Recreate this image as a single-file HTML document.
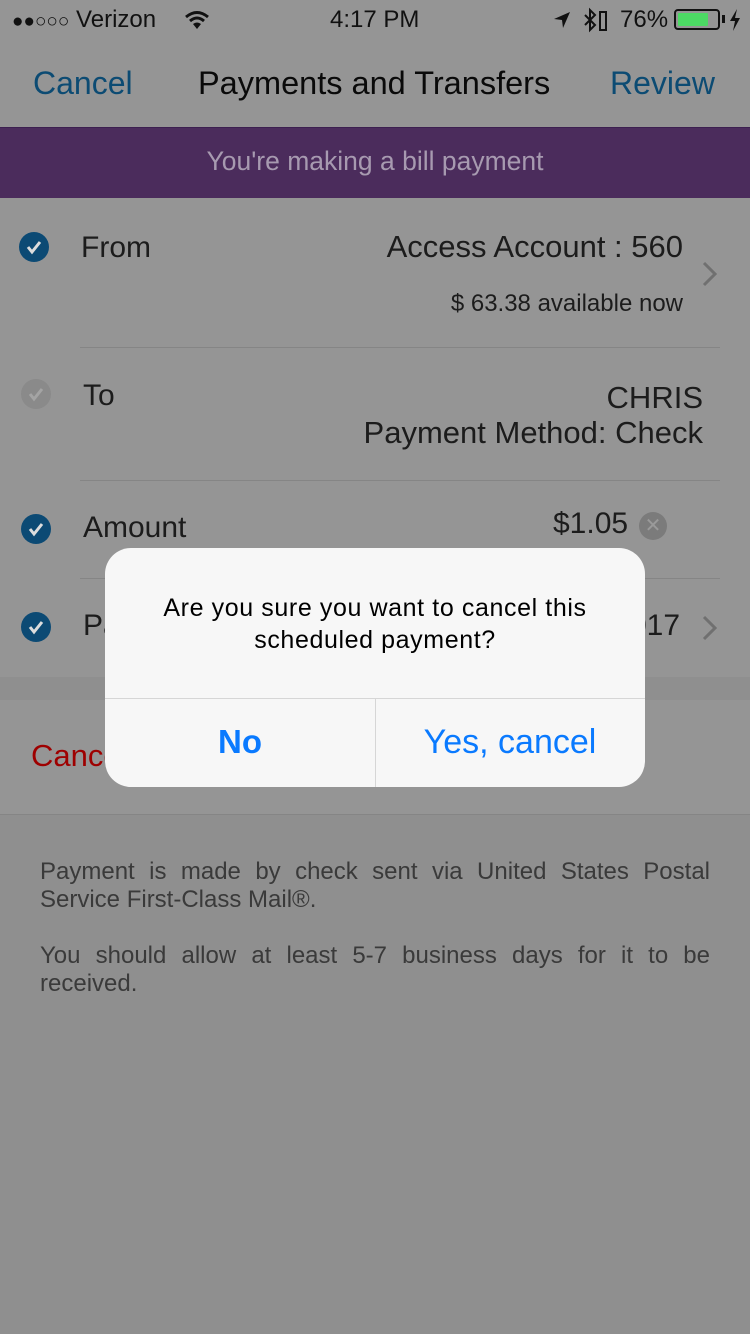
<!DOCTYPE html>
<html><head><meta charset="utf-8"><style>
*{margin:0;padding:0;box-sizing:border-box}
body{width:750px;height:1334px;position:relative;overflow:hidden;background:#8f8f8f;font-family:"Liberation Sans",sans-serif;color:#1c1c1c}
.a{position:absolute;white-space:nowrap}
.row{position:absolute;left:0;width:750px;background:#959595}
.line{position:absolute;left:80px;right:30px;height:1px;background:#858585}
.chk{position:absolute;width:30px;height:30px;border-radius:50%;background:#0c4a74}
.chk svg{position:absolute;left:0;top:0}
.lbl{font-size:30px;color:#1c1c1c}
.chev{position:absolute}
</style></head><body>
<div class="row" style="top:0;height:128px;background:#959595"></div>
<div class="a" style="left:12px;top:6px;font-size:24px;color:#111"><span style="font-size:19px">●●○○○</span> Verizon</div>
<svg class="a" style="left:184px;top:10px" width="26" height="20" viewBox="0 0 26 20"><path d="M2 7 Q13 -2 24 7" stroke="#111" stroke-width="3" fill="none"/><path d="M6 11 Q13 5 20 11" stroke="#111" stroke-width="3" fill="none"/><path d="M13 19 L9 14 Q13 11 17 14 Z" fill="#111"/></svg>
<div class="a" style="left:330px;top:6px;font-size:24px;color:#111">4:17 PM</div>
<svg class="a" style="left:552px;top:10px" width="20" height="20"><path d="M18 2 L2 9 L10 10 L11 18 Z" fill="#111"/></svg>
<svg class="a" style="left:582px;top:6px" width="28" height="28"><path d="M3 9 L13 19 L8 24 L8 4 L13 9 L3 19" stroke="#111" stroke-width="2" fill="none"/><rect x="18" y="6" width="6" height="18" stroke="#111" stroke-width="2" fill="none"/></svg>
<div class="a" style="left:620px;top:6px;font-size:24px;color:#111">76%</div>
<div class="a" style="left:674px;top:9px;width:46px;height:21px;border:2px solid #111;border-radius:4px;background:#959595"><div style="margin:2px;width:30px;height:13px;background:#4cd964;border-radius:1px"></div></div>
<div class="a" style="left:722px;top:15px;width:3px;height:8px;background:#111"></div>
<svg class="a" style="left:728px;top:8px" width="14" height="24"><path d="M9 1 L2 13 L7 13 L5 23 L12 10 L7 10 Z" fill="#111"/></svg>
<div class="a" style="left:33px;top:65px;font-size:32px;color:#0c4b73">Cancel</div>
<div class="a" style="left:198px;top:65px;font-size:32.5px;color:#0a0a0a">Payments and Transfers</div>
<div class="a" style="left:610px;top:65px;font-size:32px;color:#0c4b73">Review</div>
<div class="a" style="left:0;top:127px;width:750px;height:71px;background:#4b2c5c;border-top:1px solid #3c2050"></div>
<div class="a" style="left:0;top:146px;width:750px;text-align:center;font-size:26.5px;color:#a79ab0">You're making a bill payment</div>

<div class="row" style="top:198px;height:479px"></div>
<div class="chk" style="left:19px;top:232px"><svg width="30" height="30"><path d="M9 15 L13 20 L21 10" stroke="#ddd" stroke-width="3" fill="none"/></svg></div>
<div class="a lbl" style="left:81px;top:231px">From</div>
<div class="a lbl" style="right:67px;top:229px;font-size:31px">Access Account : 560</div>
<div class="a" style="right:67px;top:290px;font-size:24px">$ 63.38 available now</div>
<svg class="chev" style="left:700px;top:260px" width="20" height="28"><path d="M4 3 L15 14 L4 25" stroke="#707070" stroke-width="3" fill="none"/></svg>
<div class="line" style="top:347px"></div>
<div class="chk" style="left:21px;top:379px;background:#8a8a8a"><svg width="30" height="30"><path d="M9 15 L13 20 L21 10" stroke="#a4a4a4" stroke-width="3" fill="none"/></svg></div>
<div class="a lbl" style="left:83px;top:379px">To</div>
<div class="a lbl" style="right:47px;top:380px;font-size:31px">CHRIS</div>
<div class="a lbl" style="right:47px;top:415px;font-size:31px">Payment Method: Check</div>
<div class="line" style="top:480px"></div>
<div class="chk" style="left:21px;top:514px"><svg width="30" height="30"><path d="M9 15 L13 20 L21 10" stroke="#ddd" stroke-width="3" fill="none"/></svg></div>
<div class="a lbl" style="left:83px;top:511px">Amount</div>
<div class="a lbl" style="left:553px;top:507px">$1.05</div>
<div class="a" style="left:639px;top:512px;width:28px;height:28px;border-radius:50%;background:#7b7b7b;color:#9a9a9a;font-size:20px;text-align:center;line-height:28px">✕</div>
<div class="line" style="top:578px"></div>
<div class="chk" style="left:21px;top:612px"><svg width="30" height="30"><path d="M9 15 L13 20 L21 10" stroke="#ddd" stroke-width="3" fill="none"/></svg></div>
<div class="a lbl" style="left:83px;top:609px">Pa</div>
<div class="a lbl" style="left:630px;top:609px">017</div>
<svg class="chev" style="left:700px;top:614px" width="20" height="28"><path d="M4 3 L15 14 L4 25" stroke="#707070" stroke-width="3" fill="none"/></svg>
<div class="row" style="top:700px;height:114px"></div>
<div class="a" style="left:31px;top:738px;font-size:31px;color:#9e0000">Cance</div>
<div class="a" style="left:0;top:814px;width:750px;height:1px;background:#858585"></div>
<div class="a" style="left:40px;top:858px;width:670px;white-space:normal;font-size:24px;line-height:28px;color:#3a3a3a;text-align:justify">Payment is made by check sent via United States Postal Service First-Class Mail®.<br><br>You should allow at least 5-7 business days for it to be received.</div>

<div class="a" style="left:105px;top:548px;width:540px;height:239px;background:#f7f7f7;border-radius:26px;overflow:hidden">
<div style="position:absolute;left:0;top:44px;width:540px;text-align:center;font-size:25px;line-height:32px;color:#000;letter-spacing:0.6px">Are you sure you want to cancel this<br>scheduled payment?</div>
<div style="position:absolute;left:0;top:150px;width:540px;height:1px;background:#d6d6d6"></div>
<div style="position:absolute;left:270px;top:150px;width:1px;height:89px;background:#d6d6d6"></div>
<div style="position:absolute;left:0;top:175px;width:270px;text-align:center;font-size:33px;font-weight:bold;color:#0a7aff">No</div>
<div style="position:absolute;left:270px;top:175px;width:270px;text-align:center;font-size:34px;color:#0a7aff">Yes, cancel</div>
</div>
</body></html>
